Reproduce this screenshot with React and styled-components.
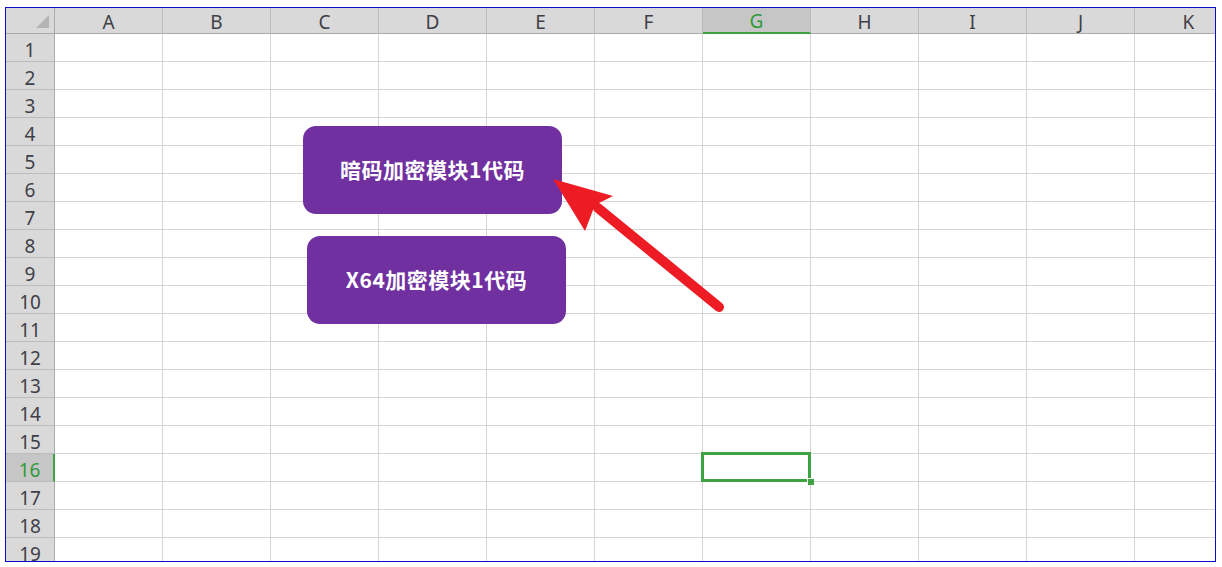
import React from "react";
import styled, { createGlobalStyle } from "styled-components";

const GlobalStyle = createGlobalStyle`
  html, body {
    margin: 0;
    padding: 0;
    background: #ffffff;
  }
  * {
    box-sizing: border-box;
  }
`;

const Page = styled.div`
  padding: 7px 0 0 5px;
  width: 1222px;
  height: 567px;
`;

const Frame = styled.div`
  position: relative;
  width: 1211px;
  height: 555px;
  border: 1px solid #0a0ac8;
  overflow: hidden;
  background: #fff;
`;

const Sheet = styled.div`
  display: grid;
  grid-template-columns: 49px repeat(11, 108px);
  grid-template-rows: 26px repeat(19, 28px);
  font-family: "Noto Sans", "Open Sans", sans-serif;
`;

const Corner = styled.div`
  position: relative;
  background: #d9d9d9;
  border-right: 1px solid #ababab;
  border-bottom: 1px solid #ababab;

  &::after {
    content: "";
    position: absolute;
    right: 5px;
    bottom: 5px;
    width: 0;
    height: 0;
    border-left: 13px solid transparent;
    border-bottom: 13px solid #b4b4b4;
  }
`;

const ColHead = styled.div`
  display: flex;
  align-items: center;
  justify-content: center;
  padding-top: 2px;
  font-size: 19px;
  color: ${(p) => (p.$active ? "#2f9a3a" : "#3f4047")};
  background: ${(p) => (p.$active ? "#c6c6c6" : "#d9d9d9")};
  border-right: 1px solid #bcbcbc;
  border-bottom: ${(p) => (p.$active ? "2px solid #3ea345" : "1px solid #ababab")};
`;

const RowHead = styled.div`
  display: flex;
  align-items: center;
  justify-content: center;
  padding-top: 4px;
  font-size: 19px;
  color: ${(p) => (p.$active ? "#2f9a3a" : "#3f4047")};
  background: ${(p) => (p.$active ? "#c6c6c6" : "#d9d9d9")};
  border-right: ${(p) => (p.$active ? "2px solid #3ea345" : "1px solid #ababab")};
  border-bottom: 1px solid #bcbcbc;
`;

const Cell = styled.div`
  position: relative;
  border-right: 1px solid #d4d4d4;
  border-bottom: 1px solid #d4d4d4;
  z-index: ${(p) => (p.$selected ? 2 : "auto")};

  ${(p) =>
    p.$selected &&
    `
    &::before {
      content: "";
      position: absolute;
      top: -2px;
      left: -2px;
      right: -1px;
      bottom: -1px;
      border: 3px solid #3fa342;
    }
    &::after {
      content: "";
      position: absolute;
      right: -4px;
      bottom: -4px;
      width: 6px;
      height: 6px;
      background: #3fa342;
      box-shadow: -1px -1px 0 0 #ffffff;
    }
  `}
`;

const ShapeButton = styled.div`
  position: absolute;
  left: ${(p) => p.$x}px;
  top: ${(p) => p.$y}px;
  width: 259px;
  height: 88px;
  padding-bottom: 3px;
  display: flex;
  align-items: center;
  justify-content: center;
  background: #7030a0;
  border-radius: 13px;
  color: #ffffff;
  font-family: "Noto Sans CJK SC", "Noto Sans", sans-serif;
  font-weight: 700;
  font-size: 21px;
  letter-spacing: 0.5px;
  z-index: 3;
`;

const Overlay = styled.svg`
  position: absolute;
  left: 0;
  top: 0;
  width: 1209px;
  height: 553px;
  pointer-events: none;
  z-index: 4;
`;

const columns = ["A", "B", "C", "D", "E", "F", "G", "H", "I", "J", "K"];
const rows = Array.from({ length: 19 }, (_, i) => i + 1);

const activeCol = "G";
const activeRow = 16;

export default function App() {
  return (
    <>
      <GlobalStyle />
      <Page>
        <Frame>
          <Sheet>
            <Corner />
            {columns.map((c) => (
              <ColHead key={c} $active={c === activeCol}>
                {c}
              </ColHead>
            ))}
            {rows.map((r) => (
              <React.Fragment key={r}>
                <RowHead $active={r === activeRow}>{r}</RowHead>
                {columns.map((c) => (
                  <Cell
                    key={c + r}
                    $selected={c === activeCol && r === activeRow}
                  />
                ))}
              </React.Fragment>
            ))}
          </Sheet>

          <ShapeButton $x={297} $y={118}>暗码加密模块1代码</ShapeButton>
          <ShapeButton $x={301} $y={228}>X64加密模块1代码</ShapeButton>

          {/* red pointer arrow */}
          <Overlay viewBox="0 0 1209 553">
            <line
              x1="713"
              y1="299"
              x2="592"
              y2="200"
              stroke="#ed1c24"
              strokeWidth="10"
              strokeLinecap="round"
            />
            <polygon points="547,171 607,188 589,197 579,223" fill="#ed1c24" />
          </Overlay>
        </Frame>
      </Page>
    </>
  );
}
